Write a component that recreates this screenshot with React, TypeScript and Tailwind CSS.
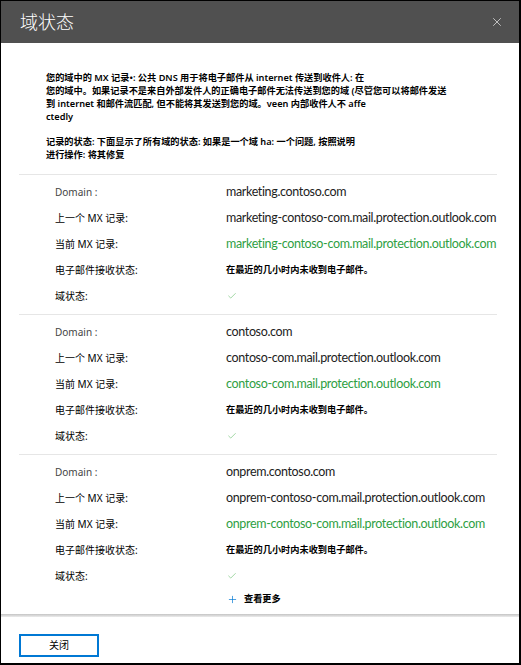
import { Plus, X, Check } from "lucide-react";

const domains = [
  {
    name: "marketing.contoso.com",
    prev: "marketing-contoso-com.mail.protection.outlook.com",
    cur: "marketing-contoso-com.mail.protection.outlook.com",
  },
  {
    name: "contoso.com",
    prev: "contoso-com.mail.protection.outlook.com",
    cur: "contoso-com.mail.protection.outlook.com",
  },
  {
    name: "onprem.contoso.com",
    prev: "onprem-contoso-com.mail.protection.outlook.com",
    cur: "onprem-contoso-com.mail.protection.outlook.com",
  },
];

const cjk = "font-['Noto_Sans','Noto_Sans_CJK_SC',sans-serif]";
const val = "font-['Lato','Noto_Sans_CJK_SC',sans-serif] text-[12.5px] tracking-[-0.35px]";

function Row({ label, children }: { label: React.ReactNode; children: React.ReactNode }) {
  return (
    <div className="flex items-center h-[26px]">
      <div className="w-[207px] shrink-0 pl-[36px] text-[10px] text-black whitespace-nowrap">{label}</div>
      <div className="flex-1 min-w-0 whitespace-nowrap flex items-center">{children}</div>
    </div>
  );
}

export default function App() {
  return (
    <div className={`w-[521px] h-[665px] bg-white border-l border-t border-black border-r-2 border-b-2 flex flex-col overflow-hidden ${cjk}`}>
      <div className="h-[42px] bg-[#505050] flex items-center justify-between pl-[19px] pr-[15px] shrink-0">
        <h1 className="text-white text-[18px] font-light leading-none">域状态</h1>
        <X className="w-[14px] h-[14px] text-[#cfcfcf]" strokeWidth={1.5} />
      </div>

      <div className="flex-1 min-h-0 pl-[18px] pr-[22px]">
        <div className="pl-[27px] pt-[28px] pb-[13px] text-[9.2px] leading-[13px] font-semibold text-black whitespace-nowrap">
          <p>
            您的域中的 MX 记录•: 公共 DNS 用于将电子邮件从 internet 传送到收件人: 在
            <br />
            您的域中。如果记录不是来自外部发件人的正确电子邮件无法传送到您的域 (尽管您可以将邮件发送
            <br />
            到 internet 和邮件流匹配, 但不能将其发送到您的域。veen 内部收件人不 affe
            <br />
            ctedly
          </p>
          <p className="mt-[12px]">
            记录的状态: 下面显示了所有域的状态: 如果是一个域 ha: 一个问题, 按照说明
            <br />
            进行操作: 将其修复
          </p>
        </div>

        {domains.map((d, i) => (
          <div key={d.name} className="border-t border-[#e6e6e6] pt-[4px] pb-[5px]">
            <Row label={<span className="text-[#444]">Domain :</span>}>
              <span className={`${val} text-[#222]`}>{d.name}</span>
            </Row>
            <Row label="上一个 MX 记录:">
              <span className={`${val} text-[#222]`}>{d.prev}</span>
            </Row>
            <Row label="当前 MX 记录:">
              <span className={`${val} text-[#2ea043]`}>{d.cur}</span>
            </Row>
            <Row label="电子邮件接收状态:">
              <span className="text-[9.2px] font-semibold text-black">在最近的几小时内未收到电子邮件。</span>
            </Row>
            <Row label="域状态:">
              <Check className="w-[10px] h-[10px] ml-[1px] text-[#6cc070]" strokeWidth={1.5} />
            </Row>
            {i === domains.length - 1 && (
              <div className="flex items-center h-[20px] pl-[208px] gap-[6px]">
                <Plus className="w-[11px] h-[11px] text-[#0078d4]" strokeWidth={1.5} />
                <span className="text-[9.2px] font-semibold text-black">查看更多</span>
              </div>
            )}
          </div>
        ))}
      </div>

      <div className="h-[3px] bg-gradient-to-b from-[#c4c4c4] to-[#ececec] shrink-0" />
      <div className="h-[46px] shrink-0 pl-[18px] pt-[14px]">
        <button className="w-[80px] h-[23px] border-2 border-[#0078d4] text-[10px] text-black">关闭</button>
      </div>
    </div>
  );
}
